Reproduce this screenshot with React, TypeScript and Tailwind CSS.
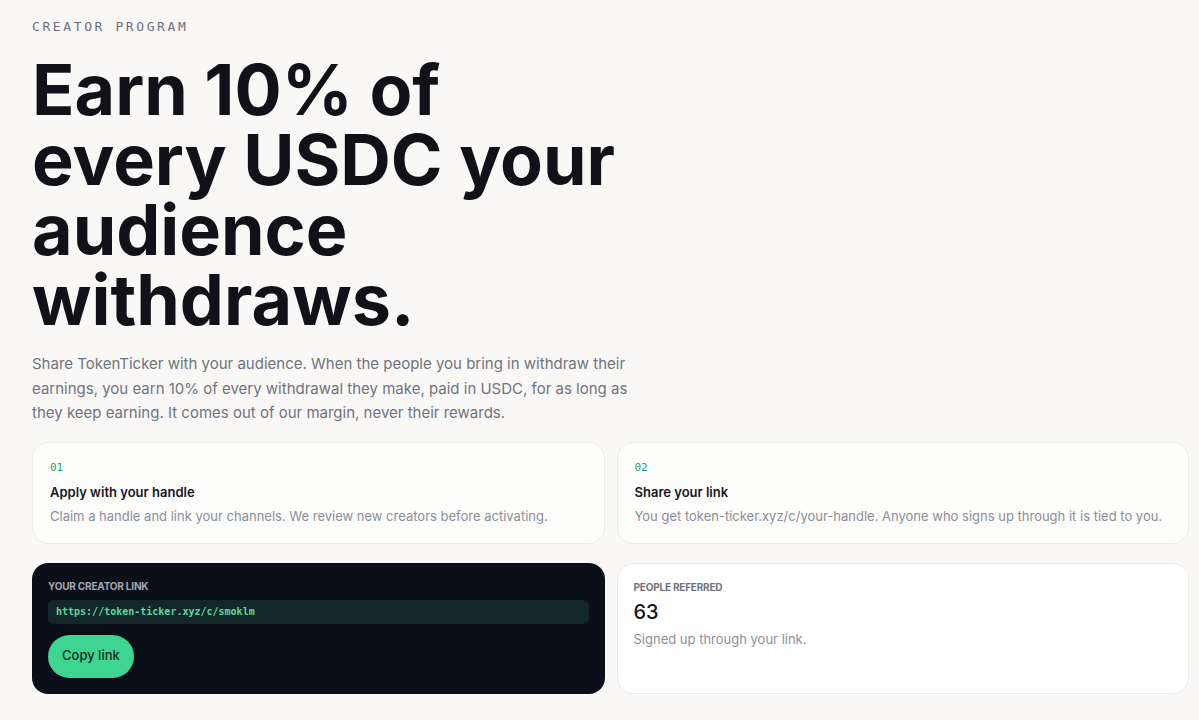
import { useState } from 'react'

const steps = [
  {
    num: '01',
    title: 'Apply with your handle',
    body: 'Claim a handle and link your channels. We review new creators before activating.',
  },
  {
    num: '02',
    title: 'Share your link',
    body: 'You get token-ticker.xyz/c/your-handle. Anyone who signs up through it is tied to you.',
  },
]

const sans = 'font-[Inter,"Noto_Sans",sans-serif]'
const mono = 'font-["DejaVu_Sans_Mono","Liberation_Mono",monospace]'

function StepCard({ num, title, body }: { num: string; title: string; body: string }) {
  return (
    <div className="rounded-2xl border border-[#ecebe8] bg-[#fdfdfc] px-[17px] pt-[17px] pb-[17px]">
      <div className={`${mono} text-[11px] leading-4 text-[#2a9d6e]`}>{num}</div>
      <div className="mt-[6px] text-[13px] leading-5 font-semibold text-[#15171c]">{title}</div>
      <div className="mt-1 text-[13px] leading-5 text-[#8b8f98]">{body}</div>
    </div>
  )
}

export default function App() {
  const link = 'https://token-ticker.xyz/c/smoklm'
  const [copied, setCopied] = useState(false)

  const handleCopy = () => {
    navigator.clipboard?.writeText(link).catch(() => {})
    setCopied(true)
    setTimeout(() => setCopied(false), 1500)
  }

  return (
    <div className={`${sans} min-h-[720px] bg-[#f9f8f6] pl-8 pr-[10px] pt-[19px] pb-6`}>
      {/* Encabezado */}
      <div className={`${mono} text-[13px] leading-4 tracking-[0.2em] text-[#6b7180]`}>CREATOR PROGRAM</div>

      <h1 className="mt-[20px] text-[70px] leading-[70px] font-bold text-[#101217]">
        Earn 10% of
        <br />
        every USDC your
        <br />
        audience
        <br />
        withdraws.
      </h1>

      <p className="mt-[17px] max-w-[600px] text-[15px] leading-[24.5px] text-[#6f7480]">
        Share TokenTicker with your audience. When the people you bring in withdraw their earnings, you earn 10% of
        every withdrawal they make, paid in USDC, for as long as they keep earning. It comes out of our margin, never
        their rewards.
      </p>

      {/* Pasos */}
      <div className="mt-4 grid grid-cols-2 gap-3">
        {steps.map((s) => (
          <StepCard key={s.num} {...s} />
        ))}
      </div>

      <div className="mt-[19px] grid grid-cols-2 gap-3">
        {/* Link del creador */}
        <div className="rounded-2xl bg-[#0b0f1a] px-4 pt-[17px] pb-4">
          <div className="text-[10px] leading-3 font-bold tracking-[-0.02em] text-[#a3a7b0]">YOUR CREATOR LINK</div>
          <div className={`${mono} mt-2 flex h-6 items-center rounded-md bg-[#13262a] px-2 text-[10px] font-bold text-[#56d99a]`}>
            {link}
          </div>
          <button
            onClick={handleCopy}
            className="mt-[11px] h-[43px] rounded-full bg-[#3ed592] px-[14px] text-[13px] font-medium text-[#0c2a1d]"
          >
            {copied ? 'Copied!' : 'Copy link'}
          </button>
        </div>

        {/* Referidos */}
        <div className="rounded-2xl border border-[#ecebe8] bg-white px-4 pt-[17px] pb-4">
          <div className="text-[10px] leading-3 font-bold tracking-[-0.02em] text-[#6f7480]">PEOPLE REFERRED</div>
          <div className="mt-[5px] text-[20px] leading-7 font-medium text-[#15171c]">63</div>
          <div className="mt-[3px] text-[13px] leading-5 text-[#8b8f98]">Signed up through your link.</div>
        </div>
      </div>
    </div>
  )
}
